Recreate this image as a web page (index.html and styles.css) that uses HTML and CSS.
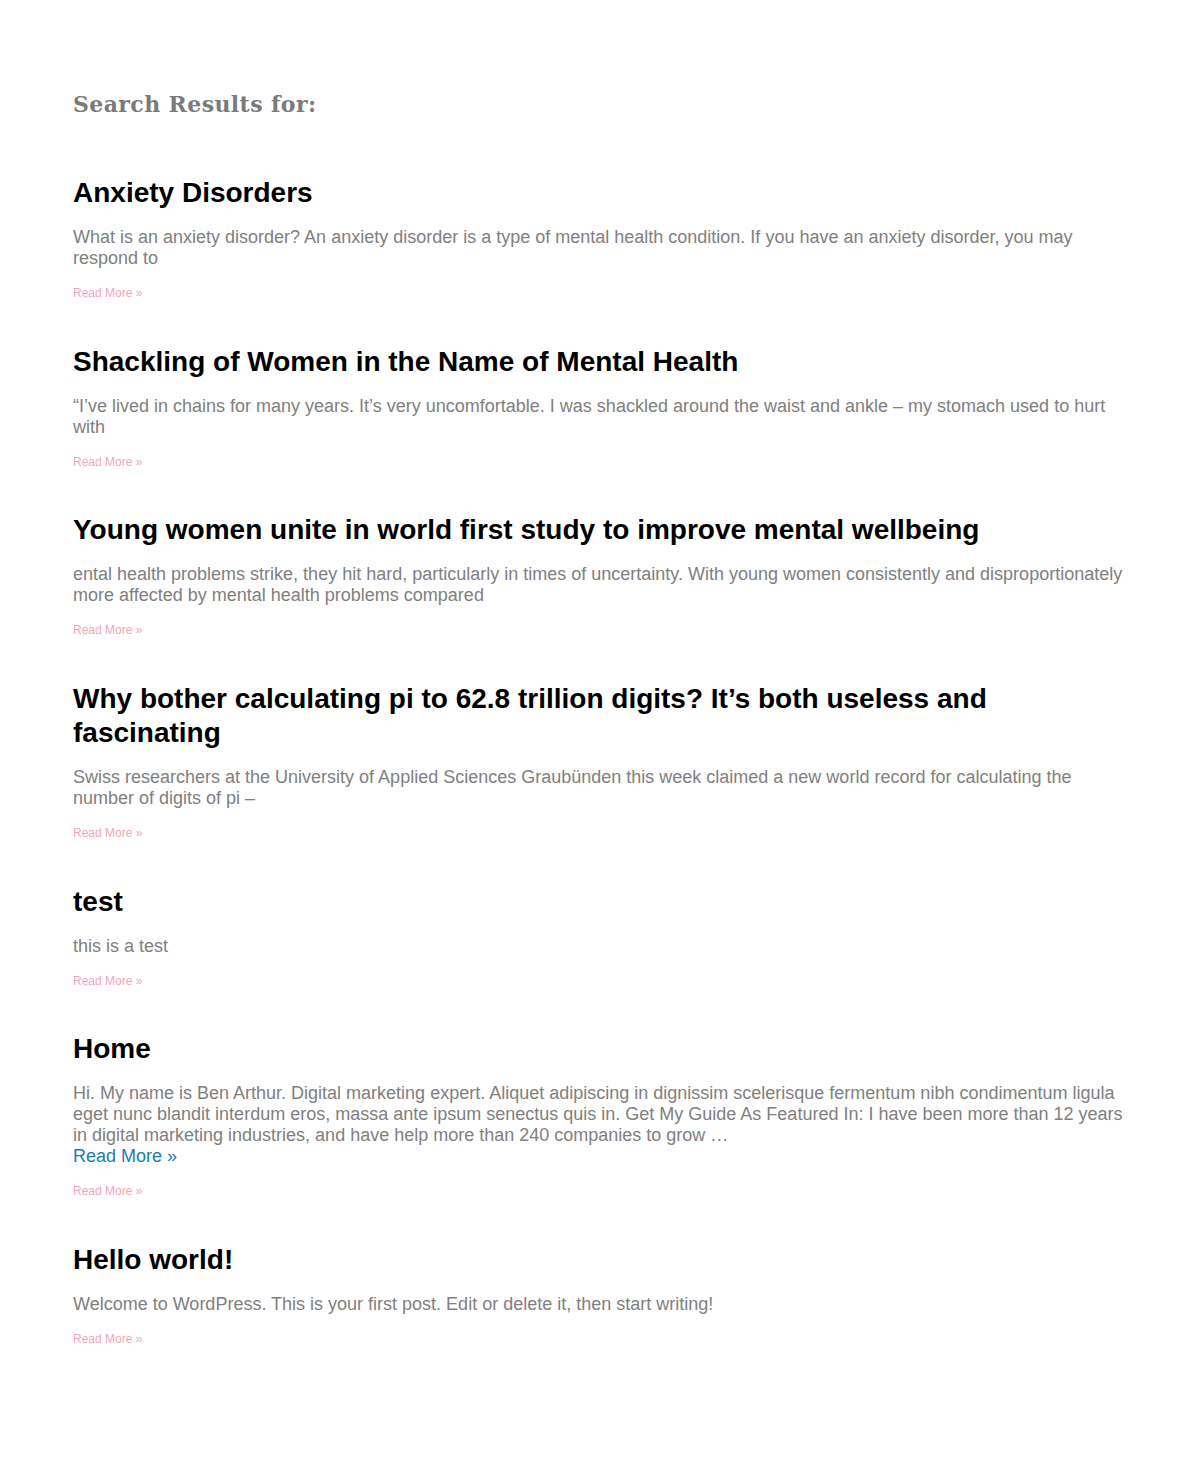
FILE: index.html
```html
<!DOCTYPE html>
<html lang="en">
<head>
<meta charset="utf-8">
<title>Search Results</title>
<link rel="stylesheet" href="styles.css">
</head>
<body>
<main class="page">
  <h1 class="page-title">Search Results for:</h1>
  <div class="results">
    <article class="post">
      <h2 class="post-title">Anxiety Disorders</h2>
      <p class="excerpt">What is an anxiety disorder? An anxiety disorder is a type of mental health condition. If you have an anxiety disorder, you may respond to</p>
      <a class="read-more" href="#">Read More »</a>
    </article>
    <article class="post">
      <h2 class="post-title">Shackling of Women in the Name of Mental Health</h2>
      <p class="excerpt">“I’ve lived in chains for many years. It’s very uncomfortable. I was shackled around the waist and ankle – my stomach used to hurt with</p>
      <a class="read-more" href="#">Read More »</a>
    </article>
    <article class="post">
      <h2 class="post-title">Young women unite in world first study to improve mental wellbeing</h2>
      <p class="excerpt">ental health problems strike, they hit hard, particularly in times of uncertainty. With young women consistently and disproportionately more affected by mental health problems compared</p>
      <a class="read-more" href="#">Read More »</a>
    </article>
    <article class="post">
      <h2 class="post-title">Why bother calculating pi to 62.8 trillion digits? It’s both useless and fascinating</h2>
      <p class="excerpt">Swiss researchers at the University of Applied Sciences Graubünden this week claimed a new world record for calculating the number of digits of pi –</p>
      <a class="read-more" href="#">Read More »</a>
    </article>
    <article class="post">
      <h2 class="post-title">test</h2>
      <p class="excerpt">this is a test</p>
      <a class="read-more" href="#">Read More »</a>
    </article>
    <article class="post">
      <h2 class="post-title">Home</h2>
      <p class="excerpt">Hi. My name is Ben Arthur. Digital marketing expert. Aliquet adipiscing in dignissim scelerisque fermentum nibh condimentum ligula eget nunc blandit interdum eros, massa ante ipsum senectus quis in. Get My Guide As Featured In: I have been more than 12 years in digital marketing industries, and have help more than 240 companies to grow …<br><a class="inline-more" href="#">Read More »</a></p>
      <a class="read-more" href="#">Read More »</a>
    </article>
    <article class="post">
      <h2 class="post-title">Hello world!</h2>
      <p class="excerpt">Welcome to WordPress. This is your first post. Edit or delete it, then start writing!</p>
      <a class="read-more" href="#">Read More »</a>
    </article>
  </div>
</main>
</body>
</html>
```

FILE: styles.css
```css
html, body {
  margin: 0;
  padding: 0;
  background: #ffffff;
}

body {
  font-family: "Liberation Sans", Arial, Helvetica, sans-serif;
}

.page {
  width: 1058px;
  padding: 86px 69px 100px 73px;
}

.page-title {
  margin: 0;
  font-family: "DejaVu Serif", "Liberation Serif", serif;
  font-weight: bold;
  font-size: 22px;
  line-height: 36px;
  color: #7a7a7a;
  letter-spacing: 0.4px;
}

.results {
  display: flex;
  flex-direction: column;
  gap: 43.65px;
  margin-top: 54px;
}

.post {
  display: flex;
  flex-direction: column;
  align-items: flex-start;
}

.post-title {
  margin: 0;
  font-size: 28px;
  line-height: 34px;
  font-weight: bold;
  color: #000000;
}

.excerpt {
  margin: 17px 0 0;
  font-size: 18px;
  line-height: 21px;
  color: #808080;
}

.inline-more {
  color: #1a7db5;
  text-decoration: none;
}

.read-more {
  margin-top: 16px;
  font-size: 12px;
  line-height: 16px;
  color: #f3a6b8;
  text-decoration: none;
}
```
